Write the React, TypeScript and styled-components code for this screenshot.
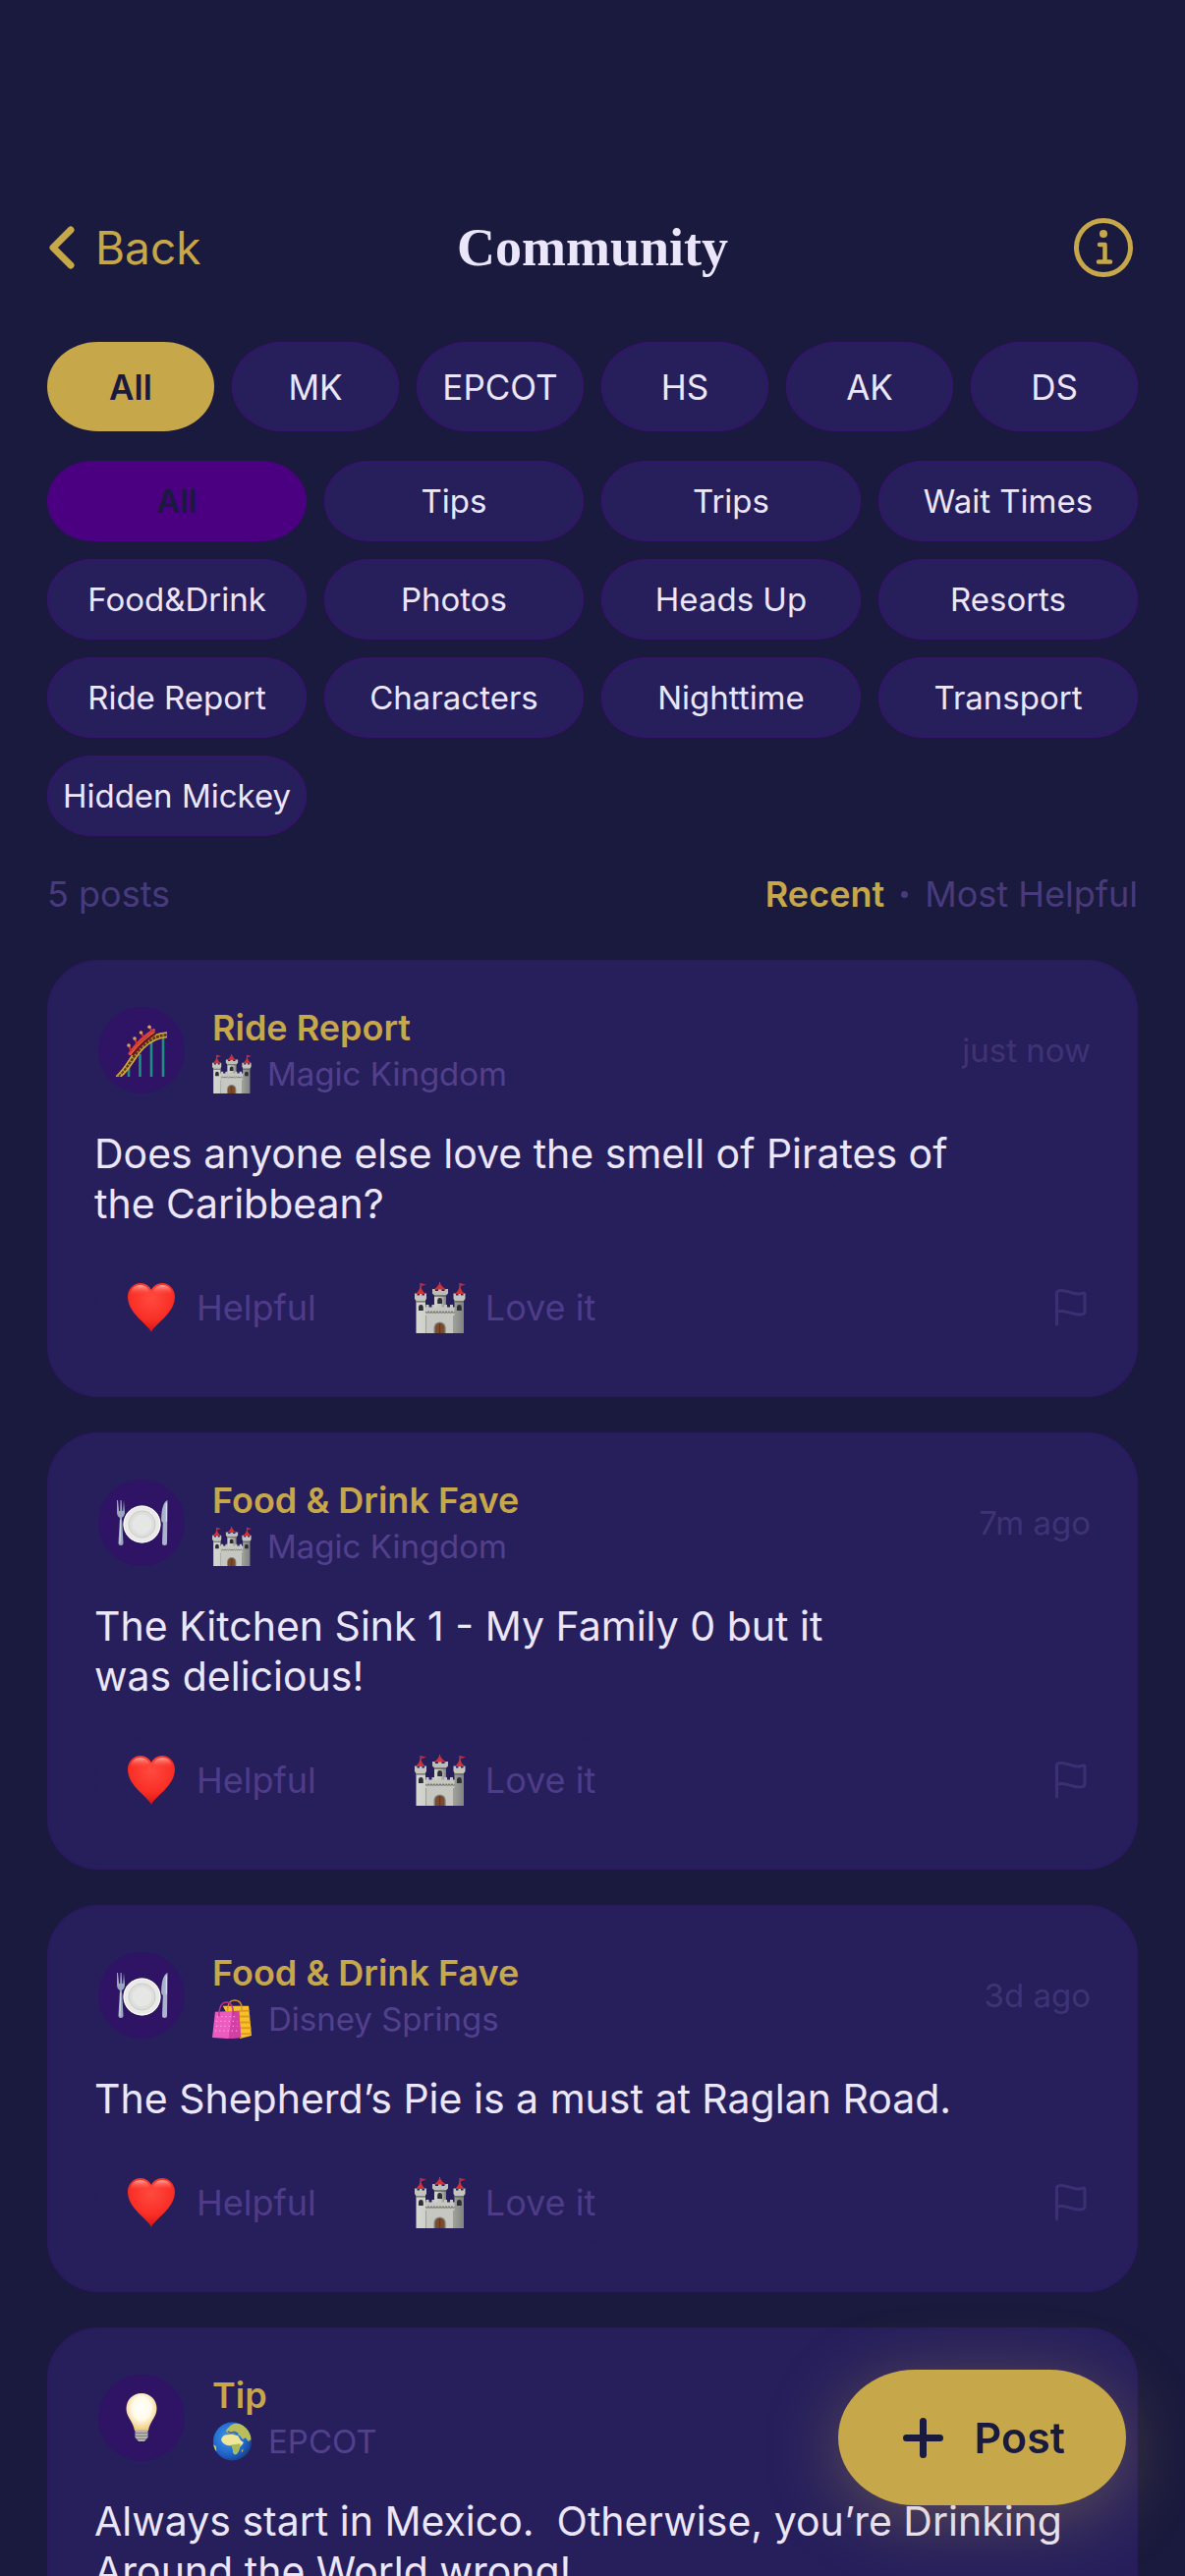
import React, { useState } from "react";
import styled, { createGlobalStyle } from "styled-components";

const color = {
  page: "#1a1a3e",
  card: "#261f5c",
  edge: "#34156a",
  cardEdge: "#2b1a60",
  indigo: "#4b0082",
  gold: "#c6a74a",
  text: "#ece6fb",
  muted: "#483a7c",
  place: "#53408d",
  action: "#4e3c89",
  faint: "#403375",
  avatar: "#2f1365",
};

const GlobalStyle = createGlobalStyle`
  * { box-sizing: border-box; }
  html, body, #root { height: 100%; }
  body { margin: 0; background: ${color.page}; }
  button { border: 0; padding: 0; background: none; font: inherit; color: inherit; cursor: pointer; }
`;

const Screen = styled.div`
  height: 100vh;
  overflow: hidden;
  display: flex;
  flex-direction: column;
  padding: 217px 48px 0;
  background: ${color.page};
  color: ${color.text};
  font-family: Inter, "Liberation Sans", sans-serif;
  font-size: 36px;
  line-height: 44px;
`;

const Header = styled.header`
  flex: none;
  display: grid;
  grid-template-columns: 1fr auto 1fr;
  align-items: center;
  height: 70px;
  color: ${color.gold};
`;

const BackButton = styled.button`
  justify-self: start;
  display: flex;
  align-items: center;
  gap: 17px;
  font-size: 46px;
  line-height: 60px;
`;

const Title = styled.h1`
  margin: 0;
  color: ${color.text};
  font-family: "Liberation Serif", serif;
  font-size: 54px;
  line-height: 60px;
  font-weight: 700;
`;

const InfoButton = styled.button`
  justify-self: end;
  display: flex;
`;

const ChipGrid = styled.div<{ $columns: number }>`
  flex: none;
  display: grid;
  grid-template-columns: repeat(${(p) => p.$columns}, minmax(0, 1fr));
  gap: 18px;
`;

const ParkGrid = styled(ChipGrid)`
  margin-top: 61px;
`;

const CategoryGrid = styled(ChipGrid)`
  margin-top: 30px;
`;

const Chip = styled.button<{ $selected: boolean }>`
  white-space: nowrap;
  color: ${(p) => (p.$selected ? color.page : color.text)};
  font-weight: ${(p) => (p.$selected ? 600 : 400)};
  box-shadow: inset 0 0 0 2px ${(p) => (p.$selected ? "transparent" : color.edge)};
`;

const ParkChip = styled(Chip)`
  height: 91px;
  border-radius: 52px / 46px;
  font-size: 35px;
  background: ${(p) => (p.$selected ? color.gold : color.card)};
`;

const CategoryChip = styled(Chip)`
  height: 82px;
  border-radius: 46px / 41px;
  font-size: 33px;
  background: ${(p) => (p.$selected ? color.indigo : color.card)};
`;

const SortRow = styled.div`
  flex: none;
  display: flex;
  justify-content: space-between;
  margin: 37px 0 45px;
  color: ${color.muted};
`;

const SortOptions = styled.div`
  display: flex;
  align-items: center;
  gap: 17px;
`;

const SortButton = styled.button<{ $selected: boolean }>`
  color: ${(p) => (p.$selected ? color.gold : color.muted)};
  font-weight: ${(p) => (p.$selected ? 600 : 400)};
`;

const Dot = styled.span`
  width: 7px;
  height: 7px;
  border-radius: 50%;
  background: ${color.muted};
`;

const Feed = styled.main`
  flex: 1;
  min-height: 0;
  display: flex;
  flex-direction: column;
  gap: 36px;
  overflow-y: auto;
  scrollbar-width: none;
`;

const Card = styled.article`
  flex: none;
  display: flex;
  flex-direction: column;
  gap: 36px;
  padding: 48px;
  border-radius: 52px;
  background: ${color.card};
  box-shadow: inset 0 0 0 2px ${color.cardEdge};
`;

const CardHead = styled.div`
  display: flex;
  align-items: center;
`;

const Avatar = styled.div`
  display: flex;
  align-items: center;
  justify-content: center;
  width: 88px;
  height: 88px;
  margin: 0 28px 0 4px;
  border-radius: 50%;
  background: ${color.avatar};
`;

const Heading = styled.div`
  flex: 1;
  display: flex;
  flex-direction: column;
  gap: 6px;
`;

const Category = styled.h2`
  margin: 0;
  color: ${color.gold};
  font-size: 36px;
  line-height: 42px;
  font-weight: 600;
`;

const Place = styled.div`
  display: flex;
  align-items: center;
  gap: 16px;
  color: ${color.place};
  font-size: 33px;
  line-height: 40px;
`;

const Time = styled.time`
  color: ${color.faint};
  font-size: 33px;
`;

const Body = styled.p`
  margin: 0;
  font-size: 41px;
  line-height: 51px;
  white-space: pre-wrap;
`;

const Actions = styled.div`
  display: flex;
  align-items: center;
  gap: 36px;
`;

const Reaction = styled.button`
  display: flex;
  align-items: center;
  gap: 20px;
  height: 87px;
  padding: 0 32px;
  border-radius: 48px / 43px;
  color: ${color.action};
  box-shadow: inset 0 0 0 2px #291d5e;
`;

const FlagButton = styled.button`
  display: flex;
  margin-left: auto;
`;

const PostButton = styled.button`
  position: fixed;
  right: 60px;
  bottom: 72px;
  display: flex;
  align-items: center;
  gap: 32px;
  height: 138px;
  padding: 0 62px 0 66px;
  border-radius: 78px / 69px;
  background: ${color.gold};
  color: ${color.page};
  font-size: 43px;
  font-weight: 600;
  box-shadow: 0 12px 72px rgba(201, 168, 76, 0.35);
`;

const Castle = ({ size }: { size: number }) => (
  <svg width={size} height={size} viewBox="0 0 52 52" aria-hidden="true">
    <defs>
      <linearGradient id="stone" x1="0" x2="1">
        <stop offset="0" stopColor="#d6d6d0" />
        <stop offset="0.5" stopColor="#c6c7c1" />
        <stop offset="1" stopColor="#82837f" />
      </linearGradient>
    </defs>
    <path d="M6 7V1M46 7V1M25.500 3V0" stroke="#8d8790" strokeWidth="0.800" />
    <path d="M6.400 1l5.400 1.600-5.400 2zM46.400 1l5.400 1.600-5.400 2z" fill="#c6263c" />
    <path d="M20 32V12h12v20z" fill="url(#stone)" />
    <path d="M18 7h3v2h3V7h3.500v2h3V7H34v4.500l-2 2H20l-2-2z" fill="#bdbeb9" />
    <path d="M25.500 0c1 3 3.500 6 6.500 7.500H19.500C22.500 6 24.500 3 25.500 0z" fill="#cf323b" />
    <path d="M9 25.500h2.500v-2.500h3v2.500h3v-2.500h3v2.500h3v-2.500h3.500v2.500h3v-2.500h3v2.500h3v-2.500h3v2.500h2.500V52H9z" fill="#c6c7c1" />
    <path d="M11 30q1.500 2.500 3 0 1.500 2.500 3 0 1.500 2.500 3 0 1.500 2.500 3 0 1.500 2.500 3 0 1.500 2.500 3 0 1.500 2.500 3 0 1.500 2.500 3 0 1.500 2.500 3 0 1.500 2.500 3 0" fill="none" stroke="#74756f" strokeWidth="1.200" />
    <path d="M11 34v18M40 34v18" stroke="#92938d" strokeWidth="1.500" />
    <path d="M1.500 17H11v35H1.500zM40.500 17H50v35h-9.500z" fill="url(#stone)" />
    <path d="M0 11.500h2.500v2H5v-2h2.500v2H10v-2h2V17l-1.500 2h-9L0 17zM39.500 11.500H42v2h2.500v-2H47v2h2.500v-2h2V17L50 19h-9l-1.500-2z" fill="#c4c5bf" />
    <path d="M6 4c1 3 2.500 6 5 8H1C3.500 10 5 7 6 4zM46 4c1 3 2.500 6 5 8H41c2.500-2 4-5 5-8z" fill="#cf323b" />
    <path d="M1.500 19.800H11M40.500 19.800H50M20 14H32" stroke="#63645f" strokeWidth="1.300" />
    <path d="M4 29v-3.500a2.400 2.400 0 0 1 4.800 0V29zM43 29v-3.500a2.400 2.400 0 0 1 4.800 0V29zM23.200 22v-3.500a2.400 2.400 0 0 1 4.800 0V22z" fill="#2b2e37" />
    <path d="M19.500 52v-5.500a6.100 6.100 0 0 1 12.200 0V52z" fill="#85867f" />
    <path d="M20.800 52v-5.500a4.800 4.800 0 0 1 9.600 0V52z" fill="#7c4a2d" />
    <path d="M25.600 42v10" stroke="#55301c" strokeWidth="0.800" />
  </svg>
);

const Heart = () => (
  <svg width="52" height="50" viewBox="0 0 52 50" aria-hidden="true">
    <defs>
      <radialGradient id="heart" cx="0.5" cy="0.3" r="0.75">
        <stop offset="0" stopColor="#ff4a3f" />
        <stop offset="0.6" stopColor="#f92f26" />
        <stop offset="1" stopColor="#c9100f" />
      </radialGradient>
      <linearGradient id="shine" x1="0" y1="0" x2="0" y2="1">
        <stop offset="0" stopColor="#ffb5ab" stopOpacity="0.9" />
        <stop offset="1" stopColor="#ff4a3f" stopOpacity="0" />
      </linearGradient>
    </defs>
    <path d="M26 50C23 42 2 31 2 14 2 6 8 0 15 0c5 0 9 3 11 7 2-4 6-7 11-7 7 0 13 6 13 14 0 17-21 28-24 36z" fill="url(#heart)" />
    <path d="M5 12c0-6 4-10 10-10 4 0 7 2 9 6-3 3-14 3-19 4zM47 12c0-6-4-10-10-10-4 0-7 2-9 6 3 3 14 3 19 4z" fill="url(#shine)" />
  </svg>
);

const Coaster = () => (
  <svg width="52" height="53" viewBox="0 0 52 53" aria-hidden="true">
    <path d="M13 44v9M24.500 30v23M36 18v35M48 11v42" stroke="#1d8f84" strokeWidth="2.600" />
    <path d="M2 53C12 45 17 31 27 21.500 34 15 42 10.500 52 10" fill="none" stroke="#5b3d1c" strokeWidth="4.500" />
    <path d="M0 53C11 44 15.500 29.500 25.500 20 33 13 41 8.500 52 8" fill="none" stroke="#d9ab3c" strokeWidth="1.600" />
    <path d="M4.500 53C14 46 19 33 28.500 23.500 35.500 17 43 13 52 12.500" fill="none" stroke="#d9ab3c" strokeWidth="1.600" />
    <path d="M2 53C12 45 17 31 27 21.500 34 15 42 10.500 52 10" fill="none" stroke="#c79a3a" strokeWidth="4" strokeDasharray="1 3" />
    <path d="M16 30.500C22 23 30 14 39.500 8.500" fill="none" stroke="#701220" strokeWidth="4" />
    <path d="M14 29.500C19 22 28 12 38.500 5.500" fill="none" stroke="#dd4038" strokeWidth="3.200" strokeLinecap="round" />
    <path d="M14.500 31C20 24 29 14 39.500 7.500" fill="none" stroke="#f0913f" strokeWidth="1" />
    <path d="M13.500 22l2 5M19.500 15l2 5M26 9l2.500 4M34.500 3l2.500 4" stroke="#c8343a" strokeWidth="2" />
    <g fill="#dba05e">
      <circle cx="13" cy="21" r="1.800" />
      <circle cx="19" cy="14" r="1.800" />
      <circle cx="25.500" cy="8" r="1.800" />
      <circle cx="34" cy="2.200" r="1.800" />
    </g>
  </svg>
);

const Plate = () => (
  <svg width="53" height="47" viewBox="0 0 53 47" aria-hidden="true">
    <path d="M1 0v12c0 4 2 5 3 6L2.500 43.500a2.300 2.300 0 0 0 5 0L6 18c1-1 3-2 3-6L8 0l-.8 11h-.9L5.600 0h-1l-.4 11h-1L2 0z" fill="#9aa6bf" />
    <path d="M4.800 20L4 44" stroke="#d5deec" strokeWidth="0.900" />
    <circle cx="26.500" cy="24.500" r="19" fill="#e9e9e7" />
    <circle cx="26.500" cy="24.500" r="18.400" fill="none" stroke="#ffffff" strokeWidth="1" />
    <circle cx="26.500" cy="24.500" r="13.500" fill="#dededc" stroke="#c4c4c3" strokeWidth="0.800" />
    <circle cx="26.500" cy="24.500" r="10" fill="#e6e6e4" />
    <path d="M52.500 0c-5 2-6.500 12-6.300 21l1.600 2L47 43.500a2.300 2.300 0 0 0 5 0z" fill="#a9b4ca" />
    <path d="M51.300 3v19" stroke="#e3e9f3" strokeWidth="1" />
  </svg>
);

const Bulb = () => (
  <svg width="52" height="50" viewBox="0 0 52 50" aria-hidden="true">
    <defs>
      <radialGradient id="glow" cx="0.5" cy="0.4" r="0.6">
        <stop offset="0" stopColor="#ffffff" />
        <stop offset="0.5" stopColor="#fffbe9" />
        <stop offset="1" stopColor="#f1c877" />
      </radialGradient>
    </defs>
    <path d="M26 0c9 0 15.500 7 15.500 15.500 0 9-7 13-8.500 22.500H19c-1.500-9.500-8.500-13.500-8.500-22.500C10.500 7 17 0 26 0z" fill="url(#glow)" />
    <path d="M19.500 37.500h13V45l-3.500 4h-6l-3.500-4z" fill="#b3b0ae" />
    <path d="M19.500 40.500h13M19.500 43.500h13M21 46.500h10" stroke="#7f7c7d" strokeWidth="0.900" />
  </svg>
);

const Bags = () => (
  <svg width="41" height="40" viewBox="0 0 42 41" aria-hidden="true">
    <path d="M11 7h27l3 31-12 3z" fill="#f6c12b" />
    <path d="M28 12h10.500M28.500 18h10.700M29 24h11M29.500 30h11M30 36h11" stroke="#e09a1a" strokeWidth="2" />
    <path d="M16 12C16 2 20 1 23.500 1S31 3 31 11" fill="none" stroke="#d9902e" strokeWidth="1.500" />
    <path d="M3 13l25-1 2 28-14 1-16-1z" fill="#ee5bc0" />
    <path d="M21 12.300l7-.3 2 28-13 1z" fill="#d43fa4" />
    <path d="M5 18h20M4 23h22M4 28h22M3 33h24" stroke="#ffa0e0" strokeWidth="1.300" strokeDasharray="1.300 3" />
    <path d="M7 18C7 6 11 3 15 3s7 3 7 13" fill="none" stroke="#c22f8e" strokeWidth="1.500" />
  </svg>
);

const Globe = () => (
  <svg width="41" height="40" viewBox="0 0 42 42" aria-hidden="true">
    <defs>
      <radialGradient id="sea" cx="0.4" cy="0.4" r="0.65">
        <stop offset="0" stopColor="#3f9bf0" />
        <stop offset="0.7" stopColor="#1f63c8" />
        <stop offset="1" stopColor="#163f86" />
      </radialGradient>
      <clipPath id="disc"><circle cx="21" cy="21" r="20.500" /></clipPath>
    </defs>
    <circle cx="21" cy="21" r="20.500" fill="url(#sea)" />
    <g clipPath="url(#disc)">
      <path d="M14 10c1-3 4-4 5-6 5-4 12-2 16 2 4 3 6 8 6 13l-3 2-3-4-3 2-3-4-4-3-5 1-4-1z" fill="#b9bd5c" />
      <path d="M16 10.500l4 1.500 3-1 4 2" stroke="#2a6dc9" strokeWidth="1.800" fill="none" />
      <path d="M9 19c1-3 3-5 6-5l6-.5 6 1.500 3 5 3 2c-1 3-4 4-4.500 6.500S26 35 24 35c-3-.5-2-6-3.500-9.500C16 26 9.500 24 9 19z" fill="#efe69a" />
      <path d="M20 24.500c3 0 7-1.500 10-.5-1 3-1.500 4-2 5.500-.8 2.500-2.500 5.500-4 5.500-2.500-.5-2.500-7-4-10.500z" fill="#a9bb55" />
      <path d="M0 24l3.500 2 .5 5-3 1zM30.500 31.500l2-3-.5 4z" fill="#d3c84e" />
    </g>
  </svg>
);

const Flag = () => (
  <svg width="36" height="40" viewBox="0 0 36 40" fill="none" stroke="#3d2f73" strokeWidth="3" strokeLinecap="round" strokeLinejoin="round" aria-hidden="true">
    <path d="M1.500 37V5c0-2 2-2.600 5-2.600 6 0 10 3.600 16 3.600 4 0 7.500-2 7.500 0v18c0 2-2 3-6 3-7 0-11-3.600-17-3.600-3 0-5.500.600-5.500 2" />
  </svg>
);

const castle = <Castle size={40} />;

const posts = [
  { icon: <Coaster />, category: "Ride Report", placeIcon: castle, place: "Magic Kingdom", time: "just now", body: "Does anyone else love the smell of Pirates of\nthe Caribbean?" },
  { icon: <Plate />, category: "Food & Drink Fave", placeIcon: castle, place: "Magic Kingdom", time: "7m ago", body: "The Kitchen Sink 1 - My Family 0 but it\nwas delicious!" },
  { icon: <Plate />, category: "Food & Drink Fave", placeIcon: <Bags />, place: "Disney Springs", time: "3d ago", body: "The Shepherd’s Pie is a must at Raglan Road." },
  { icon: <Bulb />, category: "Tip", placeIcon: <Globe />, place: "EPCOT", time: "", body: "Always start in Mexico.  Otherwise, you’re Drinking\nAround the World wrong!" },
];

const parks = ["All", "MK", "EPCOT", "HS", "AK", "DS"];
const categories = [
  "All", "Tips", "Trips", "Wait Times",
  "Food&Drink", "Photos", "Heads Up", "Resorts",
  "Ride Report", "Characters", "Nighttime", "Transport",
  "Hidden Mickey",
];

export default function App() {
  const [park, setPark] = useState("All");
  const [category, setCategory] = useState("All");
  const [sort, setSort] = useState("Recent");

  return (
    <Screen>
      <GlobalStyle />
      <Header>
        <BackButton>
          <svg width="32" height="46" viewBox="0 0 32 46" fill="none" stroke="currentColor" strokeWidth="7" strokeLinecap="round" strokeLinejoin="round" aria-hidden="true">
            <path d="M24 5L6 23l18 18" />
          </svg>
          Back
        </BackButton>
        <Title>Community</Title>
        <InfoButton aria-label="About the community">
          <svg width="70" height="70" viewBox="0 0 70 70" fill="none" stroke={color.gold} strokeLinecap="round" strokeLinejoin="round" aria-hidden="true">
            <circle cx="35" cy="35" r="27.500" strokeWidth="5" />
            <circle cx="35" cy="21" r="4" fill={color.gold} stroke="none" />
            <path d="M31 32h5.500v17M30 49.500h12" strokeWidth="4.500" />
          </svg>
        </InfoButton>
      </Header>

      <ParkGrid $columns={6}>
        {parks.map((name) => (
          <ParkChip key={name} $selected={name === park} onClick={() => setPark(name)}>{name}</ParkChip>
        ))}
      </ParkGrid>

      <CategoryGrid $columns={4}>
        {categories.map((name) => (
          <CategoryChip key={name} $selected={name === category} onClick={() => setCategory(name)}>{name}</CategoryChip>
        ))}
      </CategoryGrid>

      <SortRow>
        <span>5 posts</span>
        <SortOptions>
          <SortButton $selected={sort === "Recent"} onClick={() => setSort("Recent")}>Recent</SortButton>
          <Dot />
          <SortButton $selected={sort === "Most Helpful"} onClick={() => setSort("Most Helpful")}>Most Helpful</SortButton>
        </SortOptions>
      </SortRow>

      <Feed>
        {posts.map((post) => (
          <Card key={post.body}>
            <CardHead>
              <Avatar>{post.icon}</Avatar>
              <Heading>
                <Category>{post.category}</Category>
                <Place>{post.placeIcon}{post.place}</Place>
              </Heading>
              <Time>{post.time}</Time>
            </CardHead>
            <Body>{post.body}</Body>
            <Actions>
              <Reaction><Heart />Helpful</Reaction>
              <Reaction><Castle size={52} />Love it</Reaction>
              <FlagButton aria-label="Report post"><Flag /></FlagButton>
            </Actions>
          </Card>
        ))}
      </Feed>

      <PostButton>
        <svg width="41" height="41" viewBox="0 0 41 41" stroke="currentColor" strokeWidth="7" strokeLinecap="round" aria-hidden="true">
          <path d="M20.500 3.500v34M3.500 20.500h34" />
        </svg>
        Post
      </PostButton>
    </Screen>
  );
}
